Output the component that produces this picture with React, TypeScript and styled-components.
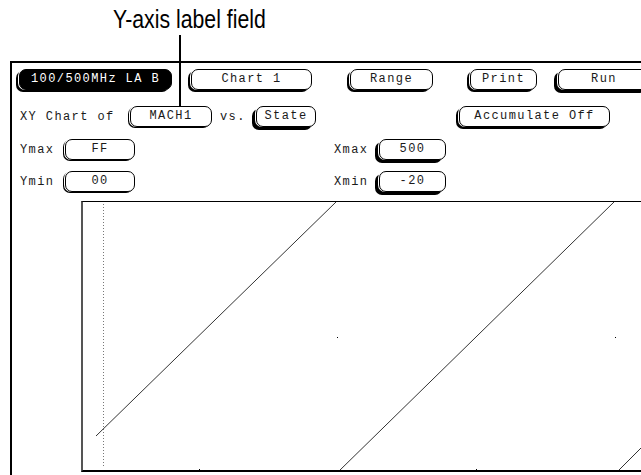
import React from "react";
import styled, { createGlobalStyle } from "styled-components";

const GlobalStyle = createGlobalStyle`
  html, body {
    margin: 0;
    padding: 0;
    background: #fff;
    overflow: hidden;
  }
  body {
    width: 641px;
    height: 475px;
  }
`;

const Page = styled.div`
  position: relative;
  width: 641px;
  height: 475px;
  overflow: hidden;
  background: #fff;
  font-family: "Liberation Mono", "DejaVu Sans Mono", monospace;
`;

const Caption = styled.div`
  height: 61px;
  box-sizing: border-box;
  padding: 7px 0 0 113px;
`;

const CaptionText = styled.span`
  display: inline-block;
  font-family: "Liberation Sans", Arial, sans-serif;
  font-size: 25px;
  line-height: 25px;
  color: #000;
  transform: scaleX(0.85);
  transform-origin: left center;
  white-space: nowrap;
`;

const Leader = styled.div`
  position: absolute;
  left: 179px;
  top: 35px;
  width: 2px;
  height: 72px;
  background: #000;
  z-index: 2;
`;

const Screen = styled.div`
  margin-left: 10px;
  height: 414px;
  box-sizing: border-box;
  border-top: 2px solid #000;
  border-left: 2px solid #000;
  padding-top: 6px;
`;

const Row = styled.div<{ $gap: number }>`
  display: flex;
  align-items: center;
  height: 22px;
  margin-top: ${(p) => p.$gap}px;
  white-space: nowrap;
`;

const Key = styled.div<{ $w: number; $dark?: boolean; $depth?: number; $ml?: number }>`
  flex: none;
  box-sizing: border-box;
  width: ${(p) => p.$w}px;
  height: 21px;
  margin-left: ${(p) => p.$ml ?? 0}px;
  margin-bottom: 1px;
  padding-bottom: 1px;
  border: 1px solid #000;
  border-radius: 7px;
  background: ${(p) => (p.$dark ? "#000" : "#fff")};
  color: ${(p) => (p.$dark ? "#fff" : "#1a1a1a")};
  box-shadow: -1px 0 0 #fff,
    -${(p) => (p.$depth ?? 1) + 1}px ${(p) => p.$depth ?? 1}px 0 #000;
  display: flex;
  align-items: center;
  justify-content: center;
  font-size: 12px;
  letter-spacing: 1.4px;
  line-height: 1;
`;

const Label = styled.div<{ $w: number; $ml: number }>`
  flex: none;
  width: ${(p) => p.$w}px;
  margin-left: ${(p) => p.$ml}px;
  padding-bottom: 1px;
  font-size: 12px;
  letter-spacing: 1.4px;
  color: #1a1a1a;
`;

const Chart = styled.div`
  margin-top: 8px;
  margin-left: 69px;
  height: 271px;
  box-sizing: border-box;
  border-left: 2px solid #555;
  border-top: 1px solid #000;
  border-bottom: 2px solid #000;
  overflow: hidden;
`;

const Plot = () => (
  <svg width="560" height="268" viewBox="0 0 560 268" style={{ display: "block" }}>
    <line x1="20.5" y1="2" x2="20.5" y2="265" stroke="#777" strokeWidth="1" strokeDasharray="1 2" />
    <line x1="13" y1="234" x2="253" y2="0" stroke="#333" strokeWidth="1" />
    <line x1="255" y1="270" x2="531" y2="0" stroke="#333" strokeWidth="1" />
    <line x1="534" y1="270" x2="564" y2="240" stroke="#333" strokeWidth="1" />
    <rect x="254" y="135" width="1" height="1" fill="#000" />
    <rect x="532" y="135" width="1" height="1" fill="#000" />
    <rect x="116" y="267" width="1" height="1" fill="#000" />
    <rect x="393" y="267" width="1" height="1" fill="#000" />
  </svg>
);

export default function App() {
  return (
    <Page>
      <GlobalStyle />
      <Caption>
        <CaptionText>Y-axis label field</CaptionText>
      </Caption>
      <Leader />
      <Screen>
        <Row $gap={0}>
          <Key $w={153} $ml={7} $dark $depth={2}>100/500MHz LA B</Key>
          <Key $w={121} $ml={19} $depth={2}>Chart 1</Key>
          <Key $w={83} $ml={38} $depth={2}>Range</Key>
          <Key $w={67} $ml={37} $depth={2}>Print</Key>
          <Key $w={92} $ml={21} $depth={3}>Run</Key>
        </Row>
        <Row $gap={15}>
          <Label $w={110} $ml={8}>XY Chart of</Label>
          <Key $w={82} $depth={1}>MACH1</Key>
          <Label $w={36} $ml={8}>vs.</Label>
          <Key $w={60} $depth={3}>State</Key>
          <Key $w={151} $ml={143} $depth={2}>Accumulate Off</Key>
        </Row>
        <Row $gap={11}>
          <Label $w={45} $ml={8}>Ymax</Label>
          <Key $w={70} $depth={1}>FF</Key>
          <Label $w={45} $ml={199}>Xmax</Label>
          <Key $w={67} $depth={3}>500</Key>
        </Row>
        <Row $gap={10}>
          <Label $w={45} $ml={8}>Ymin</Label>
          <Key $w={70} $depth={1}>00</Key>
          <Label $w={45} $ml={199}>Xmin</Label>
          <Key $w={67} $depth={3}>-20</Key>
        </Row>
        <Chart>
          <Plot />
        </Chart>
      </Screen>
    </Page>
  );
}
